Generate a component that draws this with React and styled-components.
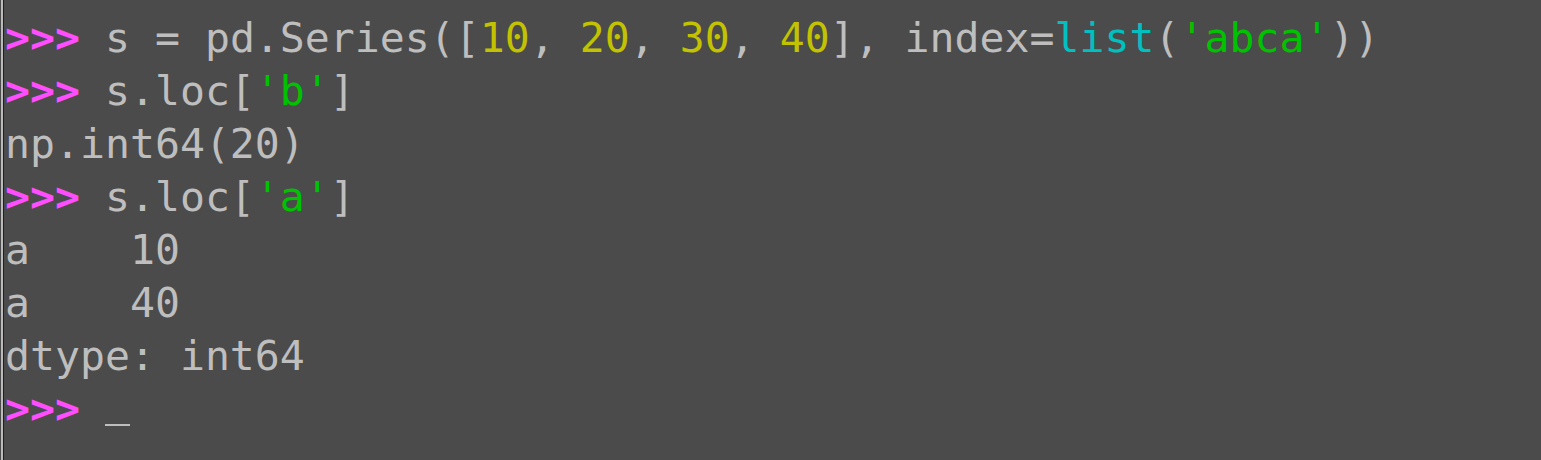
import React from 'react'
import styled, { createGlobalStyle } from 'styled-components'

const GlobalStyle = createGlobalStyle`
	html, body {
		margin: 0;
		padding: 0;
		background: #4b4b4b;
	}
`

const lines = [
	[
		{ t: 'prompt', v: '>>>' },
		{ v: ' s = pd.Series([' },
		{ t: 'num', v: '10' },
		{ v: ', ' },
		{ t: 'num', v: '20' },
		{ v: ', ' },
		{ t: 'num', v: '30' },
		{ v: ', ' },
		{ t: 'num', v: '40' },
		{ v: '], index=' },
		{ t: 'builtin', v: 'list' },
		{ v: '(' },
		{ t: 'str', v: "'abca'" },
		{ v: '))' },
	],
	[
		{ t: 'prompt', v: '>>>' },
		{ v: ' s.loc[' },
		{ t: 'str', v: "'b'" },
		{ v: ']' },
	],
	[{ v: 'np.int64(20)' }],
	[
		{ t: 'prompt', v: '>>>' },
		{ v: ' s.loc[' },
		{ t: 'str', v: "'a'" },
		{ v: ']' },
	],
	[{ v: 'a    10' }],
	[{ v: 'a    40' }],
	[{ v: 'dtype: int64' }],
]

const colors = {
	prompt: '#ff4dff',
	num: '#c2c200',
	str: '#00c200',
	builtin: '#00c0c0',
}

const Terminal = ({ rows }) => (
	<Frame>
		<Screen>
			{rows.map((row, i) => (
				<Line key={i}>
					{row.map((seg, j) => (
						<Token key={j} kind={seg.t}>
							{seg.v}
						</Token>
					))}
				</Line>
			))}
			<Line>
				<Token kind="prompt">{'>>>'}</Token> <Cursor />
			</Line>
		</Screen>
	</Frame>
)

const App = () => (
	<>
		<GlobalStyle />
		<Terminal rows={lines} />
	</>
)

const Frame = styled.div`
	min-height: 100vh;
	box-sizing: border-box;
	background: #4b4b4b;
	padding-left: 1px;
	display: flex;
`

const Screen = styled.pre`
	flex: 1;
	margin: 0;
	padding: 11px 0 0 2px;
	border-left: 2px solid #bababa;
	box-shadow: inset 1px 0 0 #1f1f1f;
	font-family: 'DejaVu Sans Mono', 'Liberation Mono', monospace;
	font-size: 41.5px;
	line-height: 53px;
	color: #bebebe;
	white-space: pre;
`

const Line = styled.div`
	height: 53px;
`

const Token = styled.span`
	color: ${({ kind }) => colors[kind] || 'inherit'};
	font-weight: ${({ kind }) => (kind === 'prompt' ? 700 : 400)};
`

const Cursor = styled.span`
	display: inline-block;
	width: 25px;
	height: 2px;
	background: #bebebe;
	vertical-align: -3px;
`

export default App
